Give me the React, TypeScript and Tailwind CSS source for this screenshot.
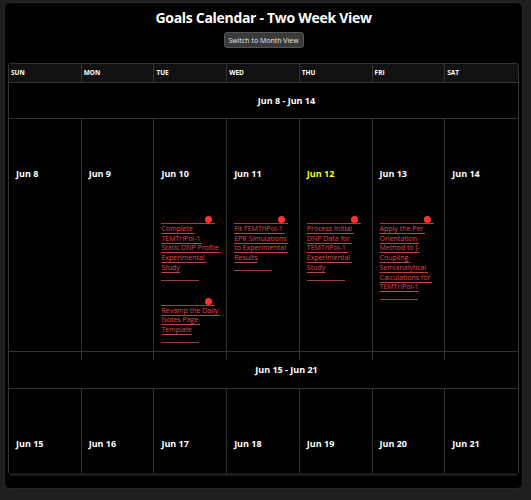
import type { ReactNode } from "react";

type Task = { lines: string[] };

const days = ["SUN", "MON", "TUE", "WED", "THU", "FRI", "SAT"];

const week1: { label: string; today?: boolean; tasks: Task[] }[] = [
  { label: "Jun 8", tasks: [] },
  { label: "Jun 9", tasks: [] },
  {
    label: "Jun 10",
    tasks: [
      { lines: ["Complete\u00a0", "TEMTriPol-1\u00a0", "Static DNP Profile\u00a0", "Experimental\u00a0", "Study"] },
      { lines: ["Revamp the Daily\u00a0", "Notes Page\u00a0", "Template"] },
    ],
  },
  {
    label: "Jun 11",
    tasks: [{ lines: ["Fit TEMTriPol-1\u00a0", "EPR Simulations\u00a0", "to Experimental\u00a0", "Results"] }],
  },
  {
    label: "Jun 12",
    today: true,
    tasks: [{ lines: ["Process Initial\u00a0", "DNP Data for\u00a0", "TEMTriPol-1\u00a0", "Experimental\u00a0", "Study"] }],
  },
  {
    label: "Jun 13",
    tasks: [
      {
        lines: [
          "Apply the Per\u00a0",
          "Orientation\u00a0",
          "Method to J-",
          "Coupling\u00a0",
          "Semianalytical\u00a0",
          "Calculations for\u00a0",
          "TEMTriPol-1",
        ],
      },
    ],
  },
  { label: "Jun 14", tasks: [] },
];

const week2 = ["Jun 15", "Jun 16", "Jun 17", "Jun 18", "Jun 19", "Jun 20", "Jun 21"].map((label) => ({
  label,
  today: false,
  tasks: [] as Task[],
}));

function TaskItem({ task }: { task: Task }) {
  return (
    <div className="mb-[17px]">
      <div className="relative h-[7px] w-[54px] box-content border-b border-[#a63c3c]">
        <span className="absolute right-[3px] top-0 h-[7px] w-[7px] rounded-full bg-[#ff3333]" />
      </div>
      <div className="text-[7px] leading-[9.7px] text-[#e44a4a]">
        {task.lines.map((l) => (
          <div key={l} className="whitespace-nowrap">
            <span className="underline decoration-[#c44242] underline-offset-[1.5px]">{l}</span>
          </div>
        ))}
      </div>
      <div className="mt-[7px] w-[38px] border-b border-[#a63c3c]" />
    </div>
  );
}

function DayCell({ label, today, tasks, last }: { label: string; today?: boolean; tasks: Task[]; last: boolean }) {
  return (
    <div className={`h-full px-[7px] pt-[49px] ${last ? "" : "border-r border-[#333]"}`}>
      <div className={`text-[9px] leading-[12px] font-bold ${today ? "text-[#ffff00]" : "text-white"}`}>{label}</div>
      <div className="mt-[36px]">
        {tasks.map((t, i) => (
          <TaskItem key={i} task={t} />
        ))}
      </div>
    </div>
  );
}

function WeekHeader({ h, children }: { h: string; children: ReactNode }) {
  return (
    <div className={`${h} border-b border-[#333] flex items-center justify-center pl-[46px] text-[9px] font-bold text-white`}>
      {children}
    </div>
  );
}

export default function App() {
  return (
    <div
      className="min-h-[500px] bg-[#1f1f1f] pl-1 pr-2 pt-[2px]"
      style={{ fontFamily: '"Open Sans", "Noto Sans", sans-serif' }}
    >
      <div className="h-[487px] rounded-md border border-[#262626] bg-black px-[3px] flex flex-col items-stretch">
        <h1 className="mt-[5px] text-center text-[14px] leading-[20px] font-bold tracking-[-0.3px] text-white">
          Goals Calendar - Two Week View
        </h1>
        <div className="mt-[4px] flex justify-center">
          <button className="h-[16px] w-[80px] rounded-[3px] border border-[#555] bg-[#3a3a3a] text-[7px] leading-none text-[#e5e5e5]">
            Switch to Month View
          </button>
        </div>
        <div className="mt-[15px] h-[410px] overflow-hidden rounded-t-[3px] border-x border-t border-[#333]">
          <div className="grid grid-cols-7 h-[19px] border-b border-[#333] bg-[#111]">
            {days.map((d, i) => (
              <div
                key={d}
                className={`flex items-center pl-[2px] text-[6.5px] font-bold text-white ${i < 6 ? "border-r border-[#333]" : ""}`}
              >
                {d}
              </div>
            ))}
          </div>
          <WeekHeader h="h-[36px]">Jun 8 - Jun 14</WeekHeader>
          <div className="grid grid-cols-7 h-[233px] border-b border-[#333]">
            {week1.map((d, i) => (
              <DayCell key={d.label} label={d.label} today={d.today} tasks={d.tasks} last={i === 6} />
            ))}
          </div>
          <WeekHeader h="h-[37px]">Jun 15 - Jun 21</WeekHeader>
          <div className="grid grid-cols-7 h-[233px]">
            {week2.map((d, i) => (
              <DayCell key={d.label} label={d.label} tasks={d.tasks} last={i === 6} />
            ))}
          </div>
        </div>
        <div className="mx-[2px] h-[3px] bg-[#1a1a1a]" />
      </div>
    </div>
  );
}
